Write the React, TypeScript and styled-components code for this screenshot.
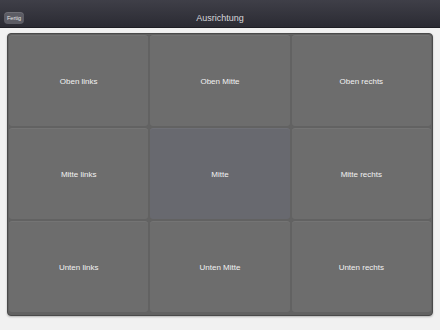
import React from 'react';
import styled, { createGlobalStyle } from 'styled-components';

const GlobalStyle = createGlobalStyle`
	html, body {
		margin: 0;
		padding: 0;
		background: #f1f1f1;
	}
	body {
		font-family: "Liberation Sans", Arial, sans-serif;
	}
`;

const labels = [
	'Oben links', 'Oben Mitte', 'Oben rechts',
	'Mitte links', 'Mitte', 'Mitte rechts',
	'Unten links', 'Unten Mitte', 'Unten rechts',
];

export default function App() {
	return (
		<Screen>
			<GlobalStyle />
			<NavBar>
				<DoneButton>Fertig</DoneButton>
				<Title>Ausrichtung</Title>
				<Side />
			</NavBar>
			<Body>
				<Panel>
					{labels.map((label, i) => (
						<Cell key={label} $selected={i === 4}>{label}</Cell>
					))}
				</Panel>
			</Body>
		</Screen>
	);
}

const Screen = styled.div`
	display: flex;
	flex-direction: column;
	width: 440px;
	height: 330px;
	background: #f1f1f1;
	overflow: hidden;
`;

const NavBar = styled.div`
	display: flex;
	align-items: center;
	justify-content: space-between;
	height: 28px;
	padding: 8px 4px 0 4px;
	box-sizing: border-box;
	background: linear-gradient(#3f3f48, #2b2b33);
	border-bottom: 1px solid #1e1e24;
`;

const DoneButton = styled.div`
	width: 20px;
	height: 12px;
	border-radius: 4px;
	background: #5c5c64;
	color: #e4e4e4;
	font-size: 5.5px;
	display: flex;
	align-items: center;
	justify-content: center;
	box-shadow: inset 0 1px 0 rgba(255, 255, 255, 0.12);
`;

const Title = styled.div`
	color: #d8d8dc;
	font-size: 9px;
`;

const Side = styled.div`
	width: 20px;
`;

const Body = styled.div`
	padding: 5px 7px 0 7px;
`;

const Panel = styled.div`
	display: grid;
	grid-template-columns: repeat(3, 1fr);
	grid-template-rows: repeat(3, 91px);
	gap: 2px;
	height: 279px;
	padding: 1px;
	background: #626262;
	border: 1px solid #4a4a4a;
	border-radius: 4px;
	box-shadow: 0 1px 2px rgba(0, 0, 0, 0.25);
`;

const Cell = styled.div<{ $selected: boolean }>`
	display: flex;
	align-items: center;
	justify-content: center;
	padding-top: 2px;
	background: ${p => p.$selected ? '#68696f' : '#6d6d6d'};
	border-radius: 3px;
	box-shadow: inset 0 1px 0 rgba(255, 255, 255, 0.05);
	color: #f2f2f2;
	font-size: 8px;
`;
